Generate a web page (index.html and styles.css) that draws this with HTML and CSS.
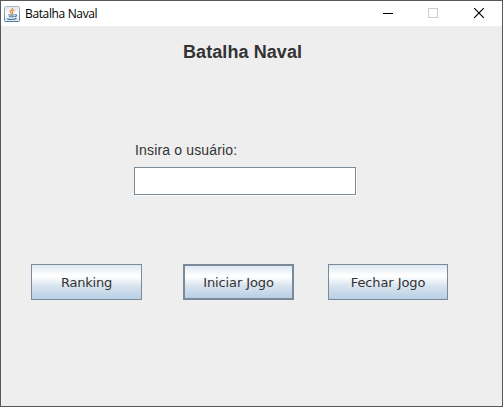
FILE: index.html
```html
<!DOCTYPE html>
<html lang="pt-BR">
<head>
<meta charset="utf-8">
<title>Batalha Naval</title>
<link rel="stylesheet" href="styles.css">
</head>
<body>
<div class="window">
  <header class="titlebar">
    <svg class="app-icon" width="16" height="16" viewBox="0 0 16 16">
      <defs>
        <linearGradient id="tile" x1="0" y1="0" x2="0" y2="1">
          <stop offset="0" stop-color="#a9bac9"/>
          <stop offset="1" stop-color="#557c9e"/>
        </linearGradient>
        <linearGradient id="face" x1="0" y1="0" x2="0" y2="1">
          <stop offset="0" stop-color="#dfe6ec"/>
          <stop offset=".5" stop-color="#fff"/>
          <stop offset="1" stop-color="#dce5ed"/>
        </linearGradient>
      </defs>
      <rect x=".5" y=".5" width="15" height="15" rx="1" fill="url(#face)" stroke="url(#tile)"/>
      <path d="M8.6 2c.9 1.5-2.6 2.4-2.3 3.8.1.8.8 1.3 1.3 1.9M10.6 4c-2.1.8-2.8 1.5-2.1 2.4.4.5.2 1-.2 1.4" fill="none" stroke="#e8872e" stroke-width="1.2"/>
      <path d="M4.3 8.7c1.8.5 4.6.4 6.3 0M5 10.6c1.6.5 3.8.5 5.3 0M11 8.8c2-.5 2 1.5-.2 2.1M3.2 12.4c-.5 1.3 7.8 1.4 9.3.1" fill="none" stroke="#427397" stroke-width="1.1"/>
    </svg>
    <span class="caption">Batalha Naval</span>
    <div class="controls">
      <svg width="46" height="25" viewBox="0 0 46 25" shape-rendering="crispEdges"><path d="M18 12.5h10" stroke="#000"/></svg>
      <svg width="46" height="25" viewBox="0 0 46 25" shape-rendering="crispEdges"><rect x="17.5" y="7.5" width="9" height="9" fill="none" stroke="#ccc"/></svg>
      <svg width="46" height="25" viewBox="0 0 46 25"><path d="M17.2 7.2l9.6 9.6M26.8 7.2l-9.6 9.6" stroke="#000" stroke-width="1.2"/></svg>
    </div>
  </header>
  <main class="content">
    <h1 class="heading">Batalha Naval</h1>
    <div class="form">
      <label class="label" for="user">Insira o usuário:</label>
      <input class="field" id="user" type="text">
    </div>
    <div class="actions">
      <button class="button ranking">Ranking</button>
      <button class="button start">Iniciar Jogo</button>
      <button class="button close">Fechar Jogo</button>
    </div>
  </main>
</div>
</body>
</html>
```
FILE: styles.css
```css
* { box-sizing: border-box; }

body { margin: 0; }

.window {
  width: 503px;
  height: 407px;
  border: 1px solid #58585a;
  background: #eee;
  color: #333;
  overflow: hidden;
}

.titlebar {
  display: flex;
  align-items: center;
  height: 25px;
  padding-left: 3px;
  background: #fff;
}

.app-icon { flex: none; }

.caption {
  margin-left: 5px;
  font: 12px/16px "Open Sans", sans-serif;
  letter-spacing: -0.36px;
  color: #000;
}

.controls {
  display: flex;
  margin: 0 -1px 0 auto;
}

.content {
  display: flex;
  flex-direction: column;
  padding: 15px 0 0 30px;
}

.heading {
  margin: 0 0 0 152px;
  font: bold 18px/22px "Liberation Sans", Arial, sans-serif;
  letter-spacing: 0.08px;
}

.form {
  display: flex;
  flex-direction: column;
  align-items: flex-start;
  margin: 78px 0 0 103px;
}

.label {
  margin-left: 1px;
  font: 14px/18px "Liberation Sans", Arial, sans-serif;
  letter-spacing: 0.16px;
}

.field {
  width: 222px;
  height: 28px;
  margin-top: 8px;
  padding: 0 4px;
  border: 1px solid #7a8a99;
  border-radius: 0;
  outline: none;
  background: #fff;
  box-shadow: 1px 1px 0 #fff;
}

.actions {
  display: flex;
  margin-top: 69px;
}

.button {
  width: 111px;
  height: 36px;
  padding: 1px 0 0;
  border: 1px solid #7a8a99;
  border-radius: 0;
  background: linear-gradient(#dde8f3 0%, #fff 30%, #fff 34%, #dae5ef 60%, #b8cfe5 100%);
  font: 13px/16px "DejaVu Sans", Tahoma, sans-serif;
  color: #333;
}

.ranking { letter-spacing: -0.25px; }

.start {
  margin-left: 41px;
  border-width: 2px;
  letter-spacing: -0.1px;
}

.close {
  width: 120px;
  margin-left: 34px;
  letter-spacing: -0.1px;
}
```
